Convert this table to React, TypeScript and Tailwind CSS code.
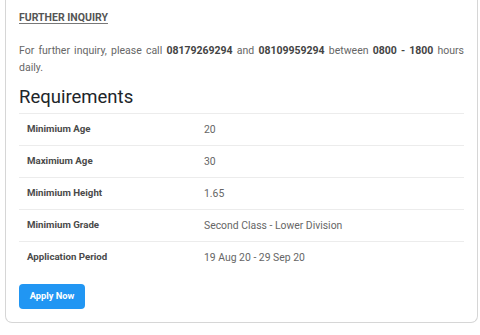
const requirements = [
  { label: 'Minimium Age', value: '20' },
  { label: 'Maximium Age', value: '30' },
  { label: 'Minimium Height', value: '1.65' },
  { label: 'Minimium Grade', value: 'Second Class - Lower Division' },
  { label: 'Application Period', value: '19 Aug 20 - 29 Sep 20' },
];

const App = () => {
  return (
    <div className="min-h-screen bg-white font-['Roboto',sans-serif]">
      <div className="ml-[5px] mr-[2px] border border-t-0 border-[#d6d6d6] rounded-b-[7px] px-[13px] pt-[11px] pb-[13px] bg-white">
        {/* Contact block */}
        <h6 className="text-[10.5px] leading-[13px] font-bold text-[#555] underline underline-offset-[2px] decoration-[#777]">
          FURTHER INQUIRY
        </h6>
        <p className="mt-[18px] text-[10.5px] leading-[17px] text-[#666] text-justify">
          For further inquiry, please call <b className="text-[#444]">08179269294</b> and{' '}
          <b className="text-[#444]">08109959294</b> between <b className="text-[#444]">0800 - 1800</b> hours daily.
        </p>

        {/* Requirements table */}
        <h4 className="mt-[10px] text-[18.5px] leading-[22px] text-[#212529]">Requirements</h4>
        <table className="mt-[5px] w-full border-collapse">
          <tbody>
            {requirements.map((row) => (
              <tr key={row.label} className="border-t border-[#ececec]">
                <td className="w-[177px] h-[32px] px-[8px] text-[9.7px] font-bold text-[#4a4a4a]">{row.label}</td>
                <td className="h-[32px] px-[8px] text-[10.4px] text-[#666]">{row.value}</td>
              </tr>
            ))}
          </tbody>
        </table>

        <button className="mt-[10px] w-[66px] h-[25px] rounded-[4px] bg-[#2196f3] text-white text-[9.3px] font-bold">
          Apply Now
        </button>
      </div>
    </div>
  );
};

export default App;
